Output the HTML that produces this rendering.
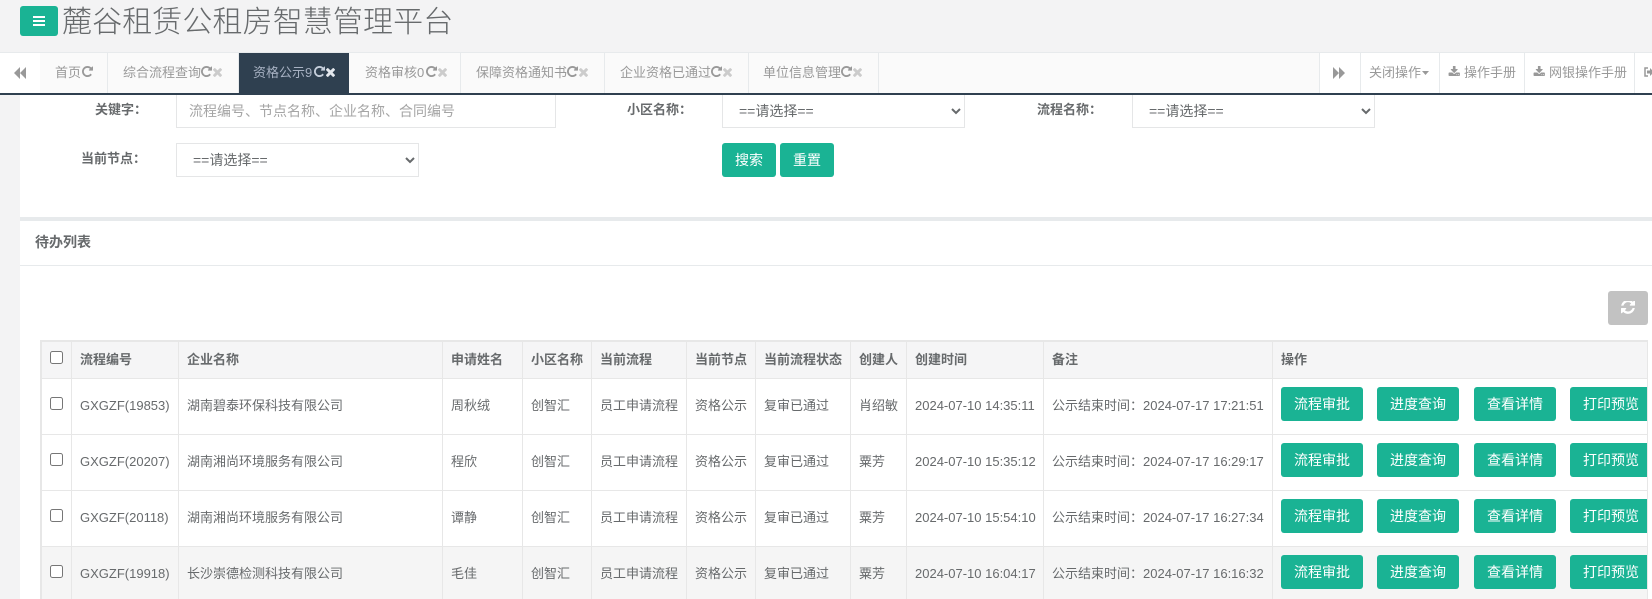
<!DOCTYPE html>
<html lang="zh-CN">
<head>
<meta charset="utf-8">
<title>麓谷租赁公租房智慧管理平台</title>
<style>
*{box-sizing:border-box}
html,body{margin:0;padding:0;width:1652px;height:599px;overflow:hidden;background:#fff}
body{position:relative;font:13px/1.4 "Liberation Sans","Noto Sans CJK SC",sans-serif;color:#676a6c}
.a{position:absolute}
.hdr{left:0;top:0;width:1652px;height:52px;background:#f3f3f4}
.menu{left:20px;top:6px;width:38px;height:30px;background:#1ab394;border-radius:3px}
.menu i{position:absolute;left:13px;width:12px;height:2px;background:#fff}
.title{left:62px;top:2px;font-size:30px;line-height:42px;font-weight:300;color:#676a6c;white-space:nowrap;letter-spacing:.1px}
.side{left:0;top:52px;width:20px;height:547px;background:#f3f3f4}
.tabs{left:0;top:52px;width:1652px;height:43px;background:#fafafa;border-top:1px solid #e7eaec;border-bottom:2px solid #2f4050;z-index:5}
.t{position:absolute;top:0;height:40px;border-right:1px solid #e7eaec;color:#999;line-height:39px;white-space:nowrap;padding-left:0}
.t span{position:absolute;top:0}
.t svg{position:absolute;top:13px}
.on{background:#2f4050;color:#a7b1c2;border-right:0}
.w{background:#fff;border-left:1px solid #e7eaec;border-right:0}
.lbl{font-weight:700;white-space:nowrap;text-align:right}
.ctl{height:34px;border:1px solid #e5e6e7;background:#fff;font:14px "Liberation Sans","Noto Sans CJK SC",sans-serif;color:#676a6c;border-radius:0;padding:0 12px;outline:0}
.ctl::placeholder{color:#a5a5a5;opacity:1}
.btn{background:#1ab394;color:#fff;font-size:14px;border-radius:3px;text-align:center;height:34px;line-height:34px;white-space:nowrap}
.wrap{left:40px;top:340px;width:1608px;height:259px;overflow:hidden;border:1px solid #e7e7e7;border-bottom:0;background:#fff}
table{border-collapse:separate;border-spacing:0;table-layout:fixed;width:1620px;border-left:1px solid #e7e7e7;border-top:1px solid #e7e7e7}
th,td{border-right:1px solid #e7e7e7;border-bottom:1px solid #e7e7e7;padding:0 0 0 8px;text-align:left;white-space:nowrap;overflow:hidden;font-size:13px;vertical-align:middle}
th{height:37px;font-weight:700;background:#f5f5f6}
td{height:56px}
tr.h td{background:#f5f5f5}
input[type=checkbox]{margin:0 0 6px 0;width:13px;height:13px;display:block;position:relative}
th input[type=checkbox]{margin-bottom:5px}
.ops{display:flex;margin-bottom:5px}
.ops .btn{flex:none;width:82px;margin-right:14px;line-height:35px}
.ops .btn:nth-child(2){margin-right:15px}
.ref{left:1608px;top:291px;width:40px;height:34px;background:#c2c2c2;border-radius:3px}
</style>
</head>
<body>
<svg width="0" height="0" style="position:absolute">
<defs>
<symbol id="rp" viewBox="0 128 1536 1536"><path d="M1536 256v448q0 26-19 45t-45 19h-448q-42 0-59-40-17-39 14-69l138-138q-148-137-349-137-104 0-198.500 40.500t-163.500 109.500-109.500 163.500-40.500 198.500 40.500 198.500 109.500 163.500 163.500 109.500 198.500 40.500q119 0 225-52t179-147q7-10 23-12 15 0 25 9l137 138q9 8 9.500 20.500t-7.500 22.500q-109 132-264 204.500t-327 72.500q-156 0-298-61t-245-164-164-245-61-298 61-298 164-245 245-164 298-61q147 0 284.500 55.500t244.500 156.500l130-129q29-31 70-14 39 17 39 59z"/></symbol>
<symbol id="xx" viewBox="110 238 1188 1316"><path d="M1298 1322q0 40-28 68l-136 136q-28 28-68 28t-68-28l-294-294-294 294q-28 28-68 28t-68-28l-136-136q-28-28-28-68t28-68l294-294-294-294q-28-28-28-68t28-68l136-136q28-28 68-28t68 28l294 294 294-294q28-28 68-28t68 28l136 136q28 28 28 68t-28 68l-294 294 294 294q28 28 28 68z"/></symbol>
<symbol id="dl" viewBox="0 64 1728 1472"><path d="M1344 1344q0-26-19-45t-45-19-45 19-19 45 19 45 45 19 45-19 19-45zm256 0q0-26-19-45t-45-19-45 19-19 45 19 45 45 19 45-19 19-45zm128-224v320q0 40-28 68t-68 28h-1472q-40 0-68-28t-28-68v-320q0-40 28-68t68-28h465l135 136q58 56 136 56t136-56l136-136h464q40 0 68 28t28 68zm-325-569q17 41-14 70l-448 448q-18 19-45 19t-45-19l-448-448q-31-29-14-70 17-39 59-39h256v-448q0-26 19-45t45-19h256q26 0 45 19t19 45v448h256q42 0 59 39z"/></symbol>
</defs>
</svg>

<div class="a hdr"></div>
<div class="a menu"><i style="top:10px"></i><i style="top:14px"></i><i style="top:18px"></i></div>
<div class="a title">麓谷租赁公租房智慧管理平台</div>
<div class="a side"></div>

<!-- form -->
<div class="a lbl" style="left:68px;top:101px;width:79px">关键字：</div>
<input class="a ctl" style="left:176px;top:94px;width:380px" placeholder="流程编号、节点名称、企业名称、合同编号">
<div class="a lbl" style="left:626px;top:101px;width:66px">小区名称：</div>
<select class="a ctl" style="left:722px;top:94px;width:243px"><option>==请选择==</option></select>
<div class="a lbl" style="left:1036px;top:101px;width:66px">流程名称：</div>
<select class="a ctl" style="left:1132px;top:94px;width:243px"><option>==请选择==</option></select>
<div class="a lbl" style="left:67px;top:150px;width:79px">当前节点：</div>
<select class="a ctl" style="left:176px;top:143px;width:243px"><option>==请选择==</option></select>
<div class="a btn" style="left:722px;top:143px;width:54px">搜索</div>
<div class="a btn" style="left:780px;top:143px;width:54px">重置</div>

<!-- tabs -->
<div class="a tabs">
 <div class="t w" style="left:0;width:40px;border-left:0">
  <svg style="left:14px;top:14px" width="12" height="12" viewBox="0 0 12 12" fill="#999"><path d="M6 0v12L0 6zM12 0v12L6 6z"/></svg>
 </div>
 <div class="t" style="left:40px;width:68px"><span style="left:15px">首页</span><svg style="left:42px" width="11" height="11" fill="#999"><use href="#rp"/></svg></div>
 <div class="t" style="left:108px;width:131px"><span style="left:15px">综合流程查询</span><svg style="left:93px" width="11" height="11" fill="#999"><use href="#rp"/></svg><svg style="left:105px;top:14px" width="9" height="10" fill="#ccc"><use href="#xx"/></svg></div>
 <div class="t on" style="left:239px;width:110px"><span style="left:14px">资格公示9</span><svg style="left:75px" width="11" height="11" fill="#c5cedb"><use href="#rp"/></svg><svg style="left:87px;top:14px" width="9" height="10" fill="#e4e8ee"><use href="#xx"/></svg></div>
 <div class="t" style="left:349px;width:112px"><span style="left:16px">资格审核0</span><svg style="left:77px" width="11" height="11" fill="#999"><use href="#rp"/></svg><svg style="left:89px;top:14px" width="9" height="10" fill="#ccc"><use href="#xx"/></svg></div>
 <div class="t" style="left:461px;width:144px"><span style="left:15px">保障资格通知书</span><svg style="left:106px" width="11" height="11" fill="#999"><use href="#rp"/></svg><svg style="left:118px;top:14px" width="9" height="10" fill="#ccc"><use href="#xx"/></svg></div>
 <div class="t" style="left:605px;width:144px"><span style="left:15px">企业资格已通过</span><svg style="left:106px" width="11" height="11" fill="#999"><use href="#rp"/></svg><svg style="left:118px;top:14px" width="9" height="10" fill="#ccc"><use href="#xx"/></svg></div>
 <div class="t" style="left:749px;width:130px"><span style="left:14px">单位信息管理</span><svg style="left:92px" width="11" height="11" fill="#999"><use href="#rp"/></svg><svg style="left:104px;top:14px" width="9" height="10" fill="#ccc"><use href="#xx"/></svg></div>
 <div class="t w" style="left:1319px;width:41px;border-right:0">
  <svg style="left:13px;top:14px" width="12" height="12" viewBox="0 0 12 12" fill="#999"><path d="M0 0v12l6-6zM6 0v12l6-6z"/></svg>
 </div>
 <div class="t w" style="left:1360px;width:79px;border-right:0"><span style="left:8px">关闭操作</span><svg style="left:61px;top:18px" width="7" height="4" viewBox="0 0 7 4" fill="#999"><path d="M0 0h7L3.500 4z"/></svg></div>
 <div class="t w" style="left:1439px;width:85px;border-right:0"><svg style="left:8px;top:13px" width="12" height="10" fill="#999"><use href="#dl"/></svg><span style="left:24px">操作手册</span></div>
 <div class="t w" style="left:1524px;width:110px;border-right:0"><svg style="left:8px;top:13px" width="12" height="10" fill="#999"><use href="#dl"/></svg><span style="left:24px">网银操作手册</span></div>
 <div class="t w" style="left:1634px;width:18px;border-right:0"><svg style="left:9px;top:14px" width="10" height="10" viewBox="0 0 10 10"><path d="M4 1H1v8h3" fill="none" stroke="#999" stroke-width="1.500"/><path d="M3 3.500h3V1l4 4-4 4V6.500H3z" fill="#999"/></svg></div>
</div>

<!-- list panel -->
<div class="a" style="left:20px;top:217px;width:1632px;height:4px;background:#e7eaec"></div>
<div class="a" style="left:35px;top:232px;font-size:14px;line-height:20px;font-weight:600">待办列表</div>
<div class="a" style="left:20px;top:265px;width:1632px;height:1px;background:#e7eaec"></div>
<div class="a ref"><svg style="position:absolute;left:13px;top:10px" width="14" height="14" fill="#fff" viewBox="0 128 1536 1536"><path d="M1511 928q0 5-1 7-64 268-268 434.500t-478 166.500q-146 0-282.500-55t-243.500-157l-129 129q-19 19-45 19t-45-19-19-45v-448q0-26 19-45t45-19h448q26 0 45 19t19 45-19 45l-137 137q71 66 161 102t187 36q134 0 250-65t186-179q11-17 53-117 8-23 30-23h192q13 0 22.500 9.500t9.500 22.500zm25-800v448q0 26-19 45t-45 19h-448q-26 0-45-19t-19-45 19-45l138-138q-148-137-349-137-134 0-250 65t-186 179q-11 17-53 117-8 23-30 23h-199q-13 0-22.500-9.500t-9.500-22.500v-7q65-268 270-434.500t480-166.500q146 0 284 55.500t245 156.500l130-129q19-19 45-19t45 19 19 45z"/></svg></div>

<div class="a wrap">
<table>
<colgroup><col style="width:30px"><col style="width:107px"><col style="width:264px"><col style="width:80px"><col style="width:69px"><col style="width:95px"><col style="width:69px"><col style="width:95px"><col style="width:56px"><col style="width:137px"><col style="width:229px"><col style="width:389px"></colgroup>
<tr><th><input type="checkbox"></th><th>流程编号</th><th>企业名称</th><th>申请姓名</th><th>小区名称</th><th>当前流程</th><th>当前节点</th><th>当前流程状态</th><th>创建人</th><th>创建时间</th><th>备注</th><th>操作</th></tr>
<tr><td><input type="checkbox"></td><td>GXGZF(19853)</td><td>湖南碧泰环保科技有限公司</td><td>周秋绒</td><td>创智汇</td><td>员工申请流程</td><td>资格公示</td><td>复审已通过</td><td>肖绍敏</td><td>2024-07-10 14:35:11</td><td>公示结束时间：2024-07-17 17:21:51</td><td><div class="ops"><div class="btn">流程审批</div><div class="btn">进度查询</div><div class="btn">查看详情</div><div class="btn">打印预览</div></div></td></tr>
<tr><td><input type="checkbox"></td><td>GXGZF(20207)</td><td>湖南湘尚环境服务有限公司</td><td>程欣</td><td>创智汇</td><td>员工申请流程</td><td>资格公示</td><td>复审已通过</td><td>粟芳</td><td>2024-07-10 15:35:12</td><td>公示结束时间：2024-07-17 16:29:17</td><td><div class="ops"><div class="btn">流程审批</div><div class="btn">进度查询</div><div class="btn">查看详情</div><div class="btn">打印预览</div></div></td></tr>
<tr><td><input type="checkbox"></td><td>GXGZF(20118)</td><td>湖南湘尚环境服务有限公司</td><td>谭静</td><td>创智汇</td><td>员工申请流程</td><td>资格公示</td><td>复审已通过</td><td>粟芳</td><td>2024-07-10 15:54:10</td><td>公示结束时间：2024-07-17 16:27:34</td><td><div class="ops"><div class="btn">流程审批</div><div class="btn">进度查询</div><div class="btn">查看详情</div><div class="btn">打印预览</div></div></td></tr>
<tr class="h"><td><input type="checkbox"></td><td>GXGZF(19918)</td><td>长沙崇德检测科技有限公司</td><td>毛佳</td><td>创智汇</td><td>员工申请流程</td><td>资格公示</td><td>复审已通过</td><td>粟芳</td><td>2024-07-10 16:04:17</td><td>公示结束时间：2024-07-17 16:16:32</td><td><div class="ops"><div class="btn">流程审批</div><div class="btn">进度查询</div><div class="btn">查看详情</div><div class="btn">打印预览</div></div></td></tr>
</table>
</div>
</body>
</html>
